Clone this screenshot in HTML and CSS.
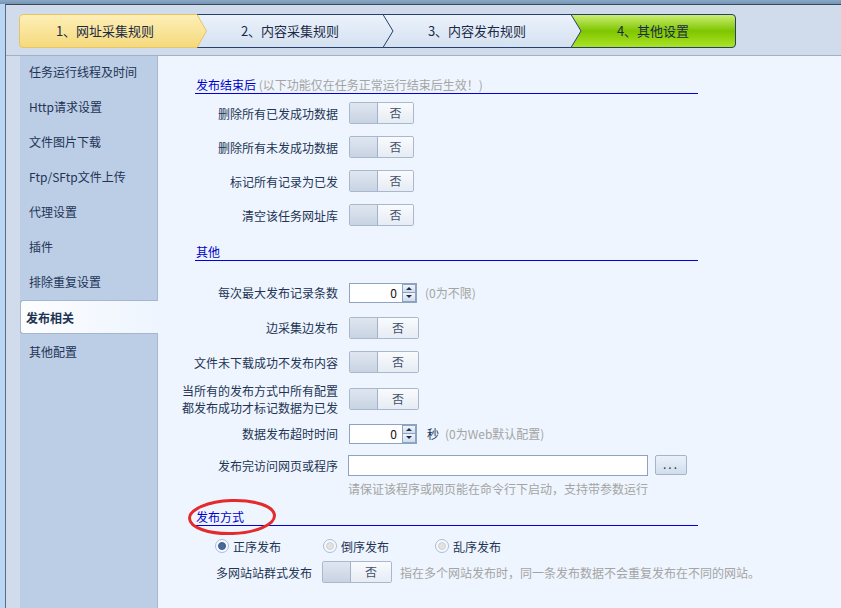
FILE: index.html
```html
<!DOCTYPE html>
<html lang="zh-CN">
<head>
    <meta charset="UTF-8">
    <title>其他设置 - 发布相关</title>
    <link rel="stylesheet" href="styles.css">
</head>
<body>
    <div class="titlebar"></div>
    <div class="window">
        <!-- 步骤标签 -->
        <div class="tabs">
            <svg class="tab-shapes" width="720" height="36" viewBox="0 0 720 36">
                <defs>
                    <linearGradient id="gYellow" x1="0" y1="0" x2="0" y2="1">
                        <stop offset="0" stop-color="#fdefb8"/>
                        <stop offset="1" stop-color="#f5d97c"/>
                    </linearGradient>
                    <linearGradient id="gBlue" x1="0" y1="0" x2="0" y2="1">
                        <stop offset="0" stop-color="#ebf2fb"/>
                        <stop offset="1" stop-color="#d5e1f1"/>
                    </linearGradient>
                    <linearGradient id="gGreen" x1="0" y1="0" x2="0" y2="1">
                        <stop offset="0" stop-color="#cdf076"/>
                        <stop offset="0.5" stop-color="#7fc500"/>
                        <stop offset="1" stop-color="#ade526"/>
                    </linearGradient>
                </defs>
                <path d="M552,0.5 H713 Q716.5,0.5 716.5,4 V30 Q716.5,33.5 713,33.5 H552 L562,17 Z" fill="url(#gGreen)"/>
                <path d="M552,0.5 H713 Q716.5,0.5 716.5,4 V30 Q716.5,33.5 713,33.5 H552" fill="none" stroke="#26406a"/>
                <path d="M364,0.5 H552 L562,17 L552,33.5 H364 L374,17 Z" fill="url(#gBlue)"/>
                <path d="M364,0.5 H552 L562,17 L552,33.5 H364" fill="none" stroke="#26406a"/>
                <path d="M178,0.5 H364 L374,17 L364,33.5 H178 L187.5,17 Z" fill="url(#gBlue)"/>
                <path d="M178,0.5 H364 L374,17 L364,33.5 H178" fill="none" stroke="#26406a"/>
                <path d="M4,0.5 H178 L187.5,17 L178,33.5 H4 Q0.5,33.5 0.5,30 V4 Q0.5,0.5 4,0.5 Z" fill="url(#gYellow)" stroke="#e7c562"/>
            </svg>
            <span class="tab tab-1">1、网址采集规则</span>
            <span class="tab tab-2">2、内容采集规则</span>
            <span class="tab tab-3">3、内容发布规则</span>
            <span class="tab tab-4">4、其他设置</span>
        </div>

        <div class="content">
            <ul class="side">
                <li>任务运行线程及时间</li>
                <li>Http请求设置</li>
                <li>文件图片下载</li>
                <li>Ftp/SFtp文件上传</li>
                <li>代理设置</li>
                <li>插件</li>
                <li>排除重复设置</li>
                <li class="active">发布相关</li>
                <li>其他配置</li>
            </ul>

            <div class="main">
                <!-- 发布结束后 -->
                <div class="section-title">发布结束后 <span class="note">(以下功能仅在任务正常运行结束后生效！)</span></div>
                <div class="group first">
                    <div class="row">
                        <span class="label">删除所有已发成功数据</span>
                        <span class="switch"><span class="knob"></span><span class="val">否</span></span>
                    </div>
                    <div class="row">
                        <span class="label">删除所有未发成功数据</span>
                        <span class="switch"><span class="knob"></span><span class="val">否</span></span>
                    </div>
                    <div class="row">
                        <span class="label">标记所有记录为已发</span>
                        <span class="switch"><span class="knob"></span><span class="val">否</span></span>
                    </div>
                    <div class="row">
                        <span class="label">清空该任务网址库</span>
                        <span class="switch"><span class="knob"></span><span class="val">否</span></span>
                    </div>
                </div>

                <!-- 其他 -->
                <div class="section-title">其他</div>
                <div class="group second">
                    <div class="row h35">
                        <span class="label">每次最大发布记录条数</span>
                        <span class="spin"><span class="num">0</span><span class="arrows"><span class="up"></span><span class="down"></span></span></span>
                        <span class="note after">(0为不限)</span>
                    </div>
                    <div class="row h35">
                        <span class="label">边采集边发布</span>
                        <span class="switch wide"><span class="knob"></span><span class="val">否</span></span>
                    </div>
                    <div class="row">
                        <span class="label">文件未下载成功不发布内容</span>
                        <span class="switch wide"><span class="knob"></span><span class="val">否</span></span>
                    </div>
                    <div class="row h39">
                        <span class="label two-line"><span class="line">当所有的发布方式中所有配置</span><span class="line">都发布成功才标记数据为已发</span></span>
                        <span class="switch wide"><span class="knob"></span><span class="val">否</span></span>
                    </div>
                    <div class="row h31">
                        <span class="label">数据发布超时时间</span>
                        <span class="spin"><span class="num">0</span><span class="arrows"><span class="up"></span><span class="down"></span></span></span>
                        <span class="unit">秒</span>
                        <span class="note">(0为Web默认配置)</span>
                    </div>
                    <div class="row h32">
                        <span class="label">发布完访问网页或程序</span>
                        <span class="text-input"></span>
                        <span class="browse">...</span>
                    </div>
                    <div class="hint-line">请保证该程序或网页能在命令行下启动，支持带参数运行</div>
                </div>

                <!-- 发布方式 -->
                <div class="section-title marked">
                    发布方式
                    <svg class="circle-mark" width="92" height="40" viewBox="0 0 92 40">
                        <ellipse cx="46" cy="20" rx="42.5" ry="16.5" fill="none" stroke="#e42a2a" stroke-width="3" transform="rotate(-2 46 20)"/>
                    </svg>
                </div>
                <div class="radios">
                    <span class="radio-item w108"><span class="radio on"></span>正序发布</span>
                    <span class="radio-item w112"><span class="radio"></span>倒序发布</span>
                    <span class="radio-item"><span class="radio"></span>乱序发布</span>
                </div>
                <div class="multi-row">
                    <span class="multi-label">多网站站群式发布</span>
                    <span class="switch wide"><span class="knob"></span><span class="val">否</span></span>
                    <span class="note">指在多个网站发布时，同一条发布数据不会重复发布在不同的网站。</span>
                </div>
            </div>
        </div>
    </div>
</body>
</html>
```

FILE: styles.css
```css
/* 基本 */
body {
    margin: 0;
    height: 608px;
    overflow: hidden;
    background: #b9d6f4;
    font-family: "Noto Sans CJK SC", "Noto Sans", sans-serif;
    font-size: 12px;
    color: #223454;
}

.titlebar {
    height: 4px;
    background: linear-gradient(#8aa8c4, #7496b6);
}

.window {
    margin-left: 5px;
    height: 604px;
    border-top: 1px solid #3d4858;
    border-left: 1px solid #5f6b7a;
    background: #d0dcec;
    display: flex;
    flex-direction: column;
}

/* 步骤标签 */
.tabs {
    position: relative;
    padding: 9px 0 0 13px;
    box-sizing: border-box;
    height: 51px;
    border-bottom: 1px solid #9fb1c8;
    display: flex;
    align-items: flex-start;
}

.tab-shapes {
    position: absolute;
    left: 13px;
    top: 9px;
}

.tab {
    position: relative;
    height: 34px;
    line-height: 34px;
    text-align: center;
    font-size: 13px;
    color: #1b2b45;
}

.tab-1 { width: 172px; }
.tab-2 { width: 186px; margin-left: 6px; }
.tab-3 { width: 188px; }
.tab-4 { width: 164px; }

/* 主区域 */
.content {
    flex: 1;
    display: flex;
    padding-left: 14px;
}

.side {
    list-style: none;
    margin: 0;
    padding: 0;
    width: 137px;
    background: #bccde6;
    border-right: 1px solid #a7b9d2;
}

.side li {
    height: 35px;
    line-height: 31px;
    padding-left: 9px;
}

.side li.active {
    height: 34px;
    line-height: 33px;
    margin: -1px -1px 2px 0;
    padding-left: 5px;
    box-sizing: border-box;
    font-weight: bold;
    background: linear-gradient(to right, #fcfdff, #eef5fe);
    border: 1px solid #a4b5cc;
    border-right: none;
    border-radius: 3px 0 0 3px;
}

.main {
    flex: 1;
    background: #eef5fe;
    padding-top: 20px;
}

.section-title {
    position: relative;
    margin-left: 37px;
    width: 502px;
    padding-left: 1px;
    line-height: 17px;
    color: #0000c8;
    border-bottom: 1px solid #0000e0;
}

.note {
    color: #a4a4a4;
}

.group.first { margin-top: 2px; margin-bottom: 11px; }
.group.second { margin-top: 14px; margin-bottom: 11px; }

.row {
    display: flex;
    align-items: center;
    height: 34px;
}

.row.h35 { height: 35px; }
.row.h39 { height: 39px; }
.row.h31 { height: 31px; }
.row.h32 { height: 32px; }

.label {
    width: 180px;
    margin-right: 11px;
    text-align: right;
    white-space: nowrap;
}

.label.two-line {
    display: flex;
    flex-direction: column;
    align-items: flex-end;
}

.label.two-line .line {
    display: block;
    height: 17px;
    line-height: 17px;
}

/* 开关 */
.switch {
    display: flex;
    width: 65px;
    height: 22px;
    box-sizing: border-box;
    border: 1px solid #a9b8ce;
    border-radius: 2px;
    overflow: hidden;
}

.switch.wide { width: 70px; }

.switch .knob {
    width: 27px;
    background: linear-gradient(#dfe6f0, #c8d3e2);
    border-right: 1px solid #a3b2c8;
}

.switch .val {
    flex: 1;
    text-align: center;
    line-height: 20px;
    background: linear-gradient(#f9fbfd, #e6ecf4);
    color: #435269;
}

/* 数字框 */
.spin {
    display: flex;
    width: 68px;
    height: 20px;
    box-sizing: border-box;
    border: 1px solid #8ea3c2;
    background: #ffffff;
}

.spin .num {
    flex: 1;
    text-align: right;
    padding-right: 5px;
    line-height: 18px;
    color: #111111;
}

.spin .arrows {
    width: 14px;
    display: flex;
    flex-direction: column;
}

.spin .arrows span {
    flex: 1;
    box-sizing: border-box;
    border: 1px solid #8ea3c2;
    background: linear-gradient(#f0f5fb, #cfdcec);
    display: flex;
    align-items: center;
    justify-content: center;
}

.spin .arrows .down { border-top: none; }

.spin .up::after,
.spin .down::after {
    content: "";
    border-left: 3px solid transparent;
    border-right: 3px solid transparent;
}

.spin .up::after { border-bottom: 3px solid #1e2e48; }
.spin .down::after { border-top: 3px solid #1e2e48; }

.note.after { margin-left: 8px; }

.unit {
    margin-left: 10px;
    margin-right: 6px;
}

.text-input {
    width: 300px;
    height: 21px;
    box-sizing: border-box;
    border: 1px solid #8ea3c2;
    background: #ffffff;
    margin-left: -1px;
}

.browse {
    margin-left: 7px;
    width: 32px;
    height: 20px;
    box-sizing: border-box;
    border: 1px solid #a2b5cd;
    border-radius: 2px;
    background: linear-gradient(#eaf1fa, #d2deed);
    text-align: center;
    line-height: 16px;
    letter-spacing: 2px;
    color: #333;
    align-self: flex-start;
    margin-top: 6px;
}

.hint-line {
    margin-left: 190px;
    line-height: 16px;
    color: #a4a4a4;
}

/* 发布方式 */
.circle-mark {
    position: absolute;
    left: -9px;
    top: -11px;
}

.radios {
    display: flex;
    align-items: center;
    height: 28px;
    margin-top: 6px;
    padding-left: 57px;
}

.radio-item {
    display: flex;
    align-items: center;
}

.radio-item.w108 { width: 108px; }
.radio-item.w112 { width: 112px; }

.radio {
    width: 14px;
    height: 14px;
    box-sizing: border-box;
    border-radius: 50%;
    border: 1px solid #a8bedb;
    background: #f6f9fd;
    display: flex;
    align-items: center;
    justify-content: center;
    margin-right: 4px;
}

.radio::after {
    content: "";
    width: 8px;
    height: 8px;
    box-sizing: border-box;
    border-radius: 50%;
    border: 1px solid #d0d0d0;
    background: #e2e2e2;
}

.radio.on::after {
    border-color: #3b5b8a;
    background: #48699a;
}

.multi-row {
    display: flex;
    align-items: center;
    height: 24px;
    padding-left: 58px;
}

.multi-label {
    margin-right: 10px;
}

.multi-row .note {
    margin-left: 8px;
}
```
